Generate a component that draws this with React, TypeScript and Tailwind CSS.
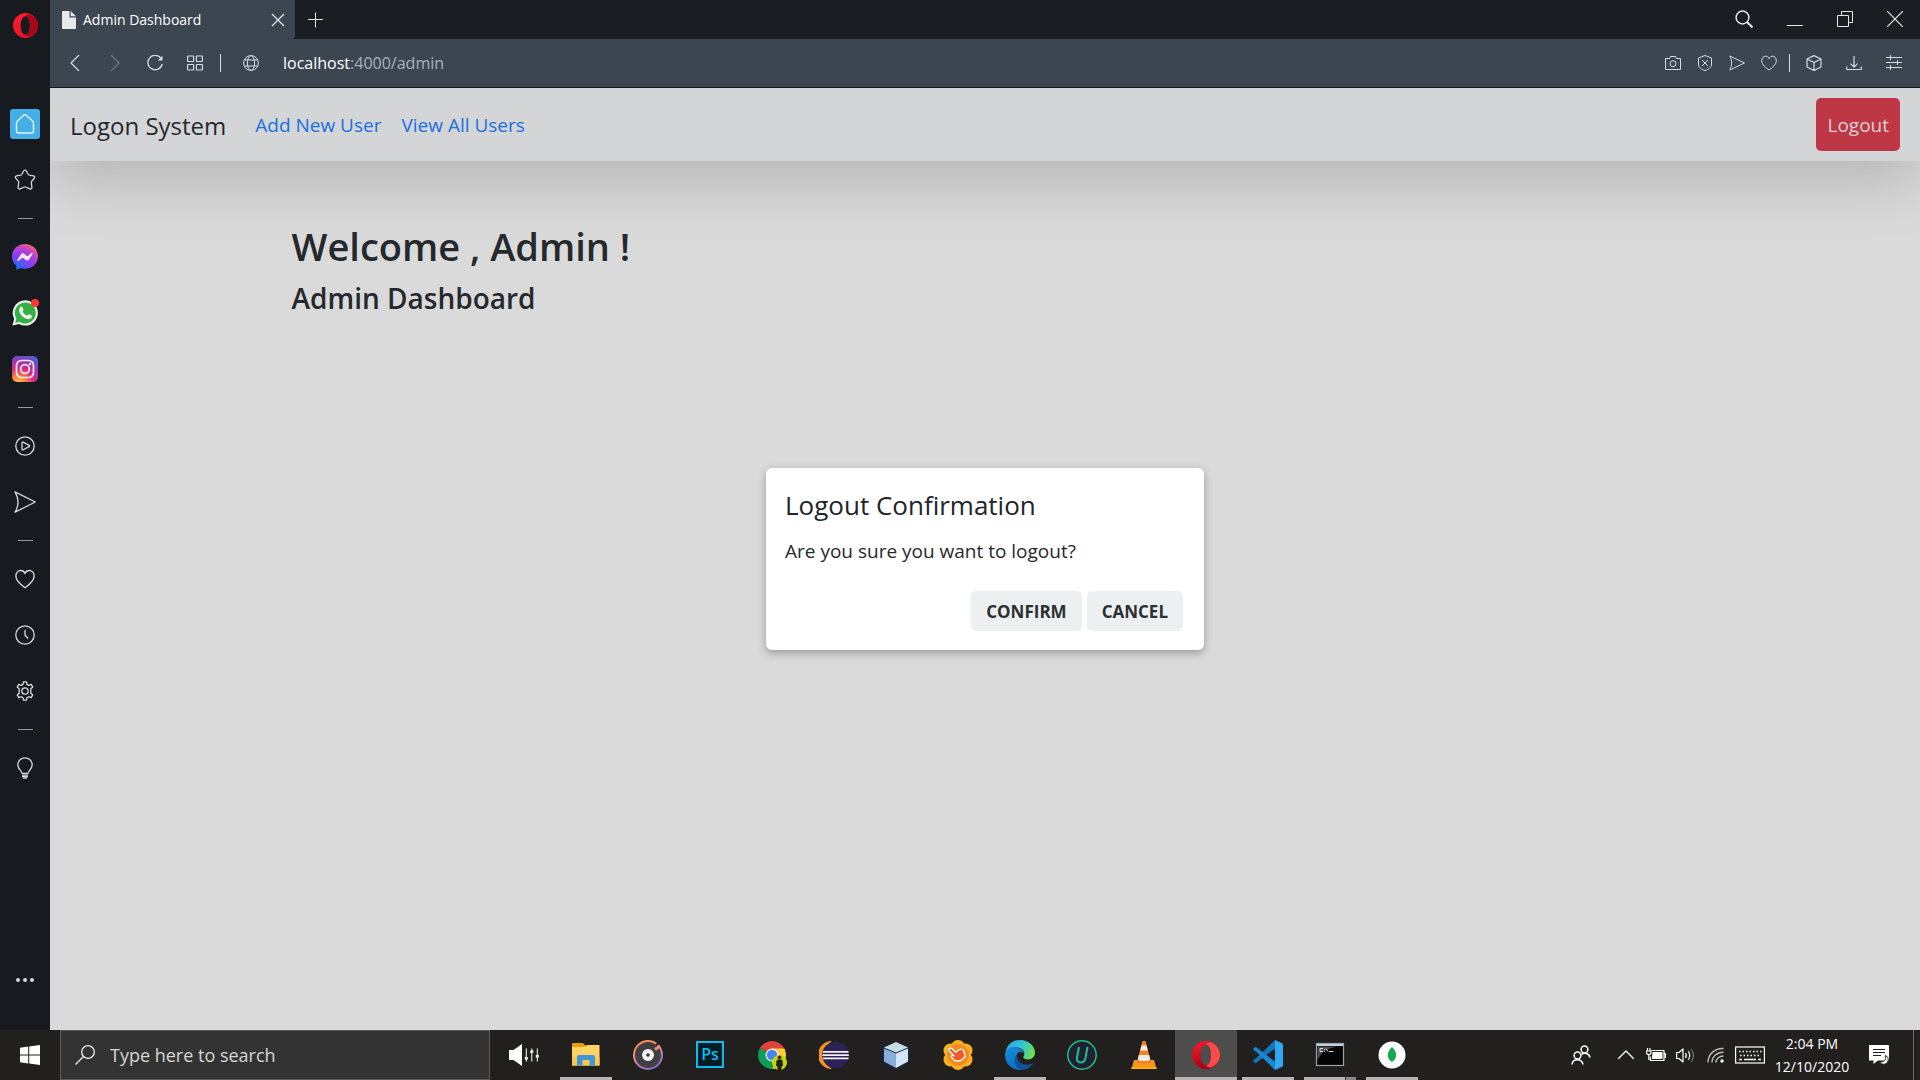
import React from 'react';

type IconProps = { children: React.ReactNode; size?: string; box?: string; w?: number };

function Line({ children, size = 'size-4', box = '0 0 16 16', w = 1 }: IconProps) {
  return (
    <svg viewBox={box} className={`${size} shrink-0`} fill="none" stroke="currentColor" strokeWidth={w} strokeLinejoin="round" aria-hidden="true">
      {children}
    </svg>
  );
}

const HEART = 'M8 15C5.2 13 .7 9.8.7 5.6.7 3 2.5 1.2 4.7 1.2 6.3 1.2 7.5 2.2 8 3.6 8.5 2.2 9.7 1.2 11.3 1.2c2.2 0 4 1.8 4 4.4C15.3 9.8 10.8 13 8 15Z';

function OperaLogo({ id, flip, size }: { id: string; flip?: boolean; size: string }) {
  return (
    <svg viewBox="0 0 28 28" className={size} aria-hidden="true">
      <defs>
        <linearGradient id={id} x1="0" y1="0" x2={flip ? '0.3' : '0'} y2="1">
          <stop offset="0" stopColor="#ff1b2d" />
          <stop offset="1" stopColor={flip ? '#a70014' : '#f01428'} />
        </linearGradient>
      </defs>
      <path d="M14 0C6.300 0 0 6.300 0 14s6.300 14 14 14c7.700 0 14-6.300 14-14S21.700 0 14 0Zm0 3.500c3 0 5 4.500 5 10.500s-2 10.500-5 10.500S8.500 20 8.500 14 11 3.500 14 3.500Z" fill={`url(#${id})`} fillRule="evenodd" />
      <path d="M14 3.500c1-1.500 3-2.200 5-1.900 5.200 1.800 9 6.700 9 12.400s-3.800 10.600-9 12.400c-2 .3-4-.4-5-1.900 3 0 5-4.500 5-10.500S17 3.500 14 3.500Z" fill={flip ? '#fa4a4a' : '#a90518'} />
    </svg>
  );
}

function SideButton({ label, children }: { label: string; children: React.ReactNode }) {
  return (
    <button type="button" aria-label={label} className="flex h-14 w-full shrink-0 items-center justify-center">
      {children}
    </button>
  );
}

function SideRule() {
  return (
    <div className="flex h-[21px] w-full shrink-0 items-center justify-center">
      <div className="h-px w-[15px] bg-[#8c9aa3]" />
    </div>
  );
}

function Sidebar() {
  return (
    <nav aria-label="Browser sidebar" className="flex w-[50px] shrink-0 flex-col items-center bg-[#171a1f] text-[#d3dadf]">
      <button type="button" aria-label="Opera menu" className="flex h-[50px] w-full items-center justify-center">
        <OperaLogo id="opera-menu" size="size-[25px]" />
      </button>
      <div className="h-[46px]" />
      <SideButton label="Speed dial">
        <span className="flex size-[30px] items-center justify-center rounded-[3px] bg-[#44aee6] text-[#e6f4fc]">
          <Line size="size-5" box="0 0 20 20" w={1.4}>
            <path d="M10 .8c.5 0 .9.200 1.300.500l6.200 5.600c.7.700 1 1.300 1 2.200V17c0 1.200-.9 2-2 2h-13c-1.100 0-2-.8-2-2V9.100c0-.9.300-1.500 1-2.200l6.200-5.600c.4-.3.800-.5 1.300-.5Z" />
          </Line>
        </span>
      </SideButton>
      <SideButton label="Bookmarks">
        <Line size="size-[22px]" box="0 0 22 22" w={1.3}>
          <path d="M9.800 1.800c.5-1 1.900-1 2.400 0l2.100 3.700c.2.300.5.500.9.600l4.300.8c1.100.2 1.500 1.500.8 2.300l-2.700 3.200c-.3.300-.4.700-.3 1.100l.6 5c.1 1.100-1 1.900-2 1.400L11.600 18c-.4-.2-.8-.2-1.200 0l-4.300 1.900c-1 .5-2.100-.3-2-1.400l.6-5c.1-.4 0-.8-.3-1.100L1.700 9.200c-.7-.8-.3-2.100.8-2.300l4.300-.8c.4-.1.700-.3.9-.6Z" />
        </Line>
      </SideButton>
      <SideRule />
      <SideButton label="Messenger">
        <svg viewBox="0 0 26 26" className="size-[26px]" aria-hidden="true">
          <defs>
            <radialGradient id="messenger" cx="0.2" cy="1" r="1.1">
              <stop offset="0" stopColor="#0a7cff" />
              <stop offset="0.5" stopColor="#8a3bf5" />
              <stop offset="0.75" stopColor="#b541d8" />
              <stop offset="1" stopColor="#f75f71" />
            </radialGradient>
          </defs>
          <path d="M13 0C5.700 0 0 5.300 0 12.500c0 3.800 1.700 7 4.400 9.300V26l4.200-1.900c1.400.5 2.900.7 4.400.7 7.300 0 13-5.300 13-12.500S20.300 0 13 0Z" fill="url(#messenger)" />
          <path d="m5.200 16.200 3.900-6.100c.6-1 1.900-1.200 2.800-.5l3 2.300c.3.200.7.200 1 0l4-3.100c.5-.4 1.200.2.900.8l-3.900 6.100c-.6 1-1.900 1.200-2.800.5l-3-2.300c-.3-.2-.7-.2-1 0l-4 3.100c-.5.4-1.200-.3-.9-.8Z" fill="#f3e9f8" />
        </svg>
      </SideButton>
      <SideButton label="WhatsApp">
        <span className="relative">
          <svg viewBox="0 0 26 26" className="size-[26px]" aria-hidden="true">
            <path d="M.4 25.600 2.200 19A12.600 12.600 0 1 1 7 23.900Z" fill="#eef2ee" />
            <path d="M3.200 22.900 4.400 18.700A10.500 10.500 0 1 1 7.400 21.800Z" fill="#35b044" />
            <path d="M8.300 7.300c.4-.8 1.400-.9 1.900-.3l1.300 2.700c.2.500-.8 1.500-1 1.900 1 2 2.500 3.300 4.600 4.100.5-.2 1.300-1.600 1.800-1.500l2.800 1.400c.6.300.2 1.800-.3 2.400-1.200 1.200-3 1.400-4.700.8-3.500-1.200-6-3.600-7.300-6.800-.4-1.700-.1-3.500.9-4.700Z" fill="#f3f8f3" />
          </svg>
          <span className="absolute -top-px -right-px size-2 rounded-full bg-[#ff3b30]" />
        </span>
      </SideButton>
      <SideButton label="Instagram">
        <svg viewBox="0 0 26 26" className="size-[26px]" aria-hidden="true">
          <defs>
            <radialGradient id="instagram" cx="0.25" cy="1.05" r="1.15">
              <stop offset="0" stopColor="#ffd15c" />
              <stop offset="0.25" stopColor="#f9813a" />
              <stop offset="0.5" stopColor="#d92e7f" />
              <stop offset="0.75" stopColor="#9b36b7" />
              <stop offset="1" stopColor="#515bd4" />
            </radialGradient>
          </defs>
          <rect width="26" height="26" rx="5" fill="url(#instagram)" />
          <g fill="none" stroke="#f6eaf3" strokeWidth="1.700">
            <rect x="4.500" y="4.500" width="17" height="17" rx="5" />
            <circle cx="13" cy="13" r="4.300" />
          </g>
          <circle cx="18" cy="8" r="1.200" fill="#f6eaf3" />
        </svg>
      </SideButton>
      <SideRule />
      <SideButton label="Player">
        <Line size="size-5" box="0 0 20 20" w={1.3}>
          <circle cx="10" cy="10" r="9.200" />
          <path d="M7 6.900c0-.7.600-1 1.200-.7l6 3.100c.6.300.6 1 0 1.300l-6 3.200c-.6.300-1.200 0-1.200-.7Z" />
        </Line>
      </SideButton>
      <SideButton label="My Flow">
        <Line size="size-[22px]" box="0 0 22 22" w={1.3}>
          <path d="M1 .8 21.300 11 1 21.200C5 14.500 5 7.500 1 .8Z" />
        </Line>
      </SideButton>
      <SideRule />
      <SideButton label="Pinboards">
        <Line size="size-5" w={1.1}>
          <path d={HEART} />
        </Line>
      </SideButton>
      <SideButton label="History">
        <Line size="size-5" box="0 0 20 20" w={1.3}>
          <circle cx="10" cy="10" r="9.200" />
          <path d="M10 5v5.300l3.200 3.200" />
        </Line>
      </SideButton>
      <SideButton label="Settings">
        <Line size="size-5" box="0 0 20 20" w={1.3}>
          <path d="M8.500.8h3l.5 2.600 1.700 1 2.500-1 1.600 2.700-2 1.700v4.400l2 1.700-1.600 2.700-2.500-.9-1.700 1-.5 2.500h-3L8 16.700l-1.700-1-2.500.9-1.600-2.700 2-1.700V7.800l-2-1.700 1.600-2.700 2.500 1 1.700-1Z" />
          <circle cx="10" cy="10" r="3.200" />
        </Line>
      </SideButton>
      <SideRule />
      <SideButton label="Tips">
        <Line size="size-[22px]" box="0 0 22 22" w={1.3}>
          <path d="M8 16.300c0-2.500-4.200-4-4.200-8.500A7.200 7.200 0 0 1 11 .8a7.200 7.200 0 0 1 7.200 7c0 4.500-4.200 6-4.200 8.500Z" />
          <path d="M8 18.100h6M8 19.600h6M9 21.200h4" />
        </Line>
      </SideButton>
      <button type="button" aria-label="Sidebar setup" className="mt-auto flex h-[100px] w-full items-center justify-center gap-[3px]">
        <span className="size-1 rounded-full bg-current" />
        <span className="size-1 rounded-full bg-current" />
        <span className="size-1 rounded-full bg-current" />
      </button>
    </nav>
  );
}

function TabBar() {
  return (
    <div className="flex h-[39px] shrink-0 items-center bg-[#1a1d21] text-[#e4e8eb]">
      <div className="flex h-full w-[245px] items-center rounded-br-[3px] bg-[#3c4651] pr-[10px] pl-3">
        <svg viewBox="0 0 14 18" className="h-[18px] w-[14px] shrink-0" fill="#e6e9eb" aria-hidden="true">
          <path d="M1 0h6.500v6.500H14V17a1 1 0 0 1-1 1H1a1 1 0 0 1-1-1V1a1 1 0 0 1 1-1Z" />
          <path d="M8.700 0 14 5.300H8.700Z" />
        </svg>
        <span className="ml-[7px] flex-1 text-sm whitespace-nowrap text-white">Admin Dashboard</span>
        <button type="button" aria-label="Close tab">
          <Line size="size-[14px]" box="0 0 14 14" w={1.2}>
            <path d="m1 1 12 12M13 1 1 13" />
          </Line>
        </button>
      </div>
      <button type="button" aria-label="New tab" className="ml-3">
        <Line w={1}>
          <path d="M8.500.5v15M1 7.500h15" />
        </Line>
      </button>
      <div className="ml-auto flex items-center gap-[34px] pr-[17px] pb-px">
        <button type="button" aria-label="Search tabs">
          <Line size="size-[18px]" box="0 0 18 18" w={1.5}>
            <circle cx="7.500" cy="7.500" r="6.400" />
            <path d="m12 12 5.500 5.500" strokeWidth="2" />
          </Line>
        </button>
        <button type="button" aria-label="Minimize">
          <Line>
            <path d="M0 14.500h16" />
          </Line>
        </button>
        <button type="button" aria-label="Restore">
          <Line>
            <path d="M.5 4.500h11v11H.5zM4.500 4.500v-4h11v11h-4" strokeLinejoin="miter" />
          </Line>
        </button>
        <button type="button" aria-label="Close window">
          <Line w={1.2}>
            <path d="m0 0 16 16M16 0 0 16" />
          </Line>
        </button>
      </div>
    </div>
  );
}

function AddressBar() {
  return (
    <div className="flex h-[49px] shrink-0 items-center border-b border-[#15181c] bg-[#3c4651] pr-[18px] pl-[17px] text-[#d5dbe0]">
      <div className="flex items-center gap-6">
        <button type="button" aria-label="Back">
          <Line w={1.2}><path d="M12 0 4 8l8 8" /></Line>
        </button>
        <button type="button" aria-label="Forward" className="text-[#6d7883]">
          <Line w={1.2}><path d="m4 0 8 8-8 8" /></Line>
        </button>
        <button type="button" aria-label="Reload">
          <Line w={1.3}>
            <path d="M14.300 3.800A7.200 7.200 0 1 0 15.200 9" />
            <path d="M15.500.8v4.700h-4.700Z" fill="currentColor" stroke="none" />
          </Line>
        </button>
        <button type="button" aria-label="Start page">
          <Line w={1.2}>
            <rect x=".6" y="1" width="6" height="5.500" rx=".5" />
            <rect x="9.400" y="1" width="6" height="5.500" rx=".5" />
            <rect x=".6" y="9.500" width="6" height="5.500" rx=".5" />
            <rect x="9.400" y="9.500" width="6" height="5.500" rx=".5" />
          </Line>
        </button>
      </div>
      <div className="ml-[17px] h-[18px] w-px bg-[#d5dbe0]" />
      <button type="button" aria-label="Site information" className="ml-[22px]">
        <Line w={1}>
          <circle cx="8" cy="8" r="7.400" />
          <ellipse cx="8" cy="8" rx="3.600" ry="7.400" />
          <path d="M1.600 5h12.800M1.600 11h12.800" />
        </Line>
      </button>
      <button type="button" aria-label="Address" className="ml-6 flex-1 text-left text-base whitespace-nowrap text-[#a9b2ba]">
        <span className="text-white">localhost</span>:4000/admin
      </button>
      <div className="flex items-center gap-4">
        <button type="button" aria-label="Snapshot">
          <Line w={1}>
            <path d="M.5 3.500h4L5.500 1.500h5l1 2h4v11H.5Z" />
            <circle cx="8" cy="8.700" r="3" />
          </Line>
        </button>
        <button type="button" aria-label="Ad blocker">
          <Line w={1}>
            <path d="M8 .5 14.500 3v6c0 3.500-3 5.500-6.500 6.600C4.500 14.500 1.500 12.500 1.500 9V3Z" />
            <path d="m5 5 6 6M11 5l-6 6" />
          </Line>
        </button>
        <button type="button" aria-label="Send to My Flow">
          <Line w={1}><path d="M.8 1 15.500 8 .8 15c2.400-4.600 2.400-9.400 0-14Z" /></Line>
        </button>
        <button type="button" aria-label="Add to bookmarks">
          <Line w={1}><path d={HEART} /></Line>
        </button>
      </div>
      <div className="ml-3 h-[18px] w-px bg-[#d5dbe0]" />
      <div className="ml-4 flex items-center gap-6">
        <button type="button" aria-label="Crypto wallet">
          <Line w={1.2}><path d="M8 .6 15 4v8l-7 3.500L1 12V4ZM1 4l7 3.500L15 4M8 7.500v8" /></Line>
        </button>
        <button type="button" aria-label="Downloads">
          <Line w={1.2}><path d="M8 1v11M4.500 8.700 8 12.200l3.500-3.500M.7 11.500v3h14.600v-3" /></Line>
        </button>
        <button type="button" aria-label="Easy setup">
          <Line w={1}><path d="M0 2.500h16M0 7.500h16M0 12.500h16M4.500 0v5M11.500 5v5M4.500 10v5" /></Line>
        </button>
      </div>
    </div>
  );
}

function Page() {
  return (
    <div className="relative flex flex-1 flex-col overflow-hidden bg-[#dadada] text-[#25292d]">
      <header className="flex h-[73px] shrink-0 items-center bg-[#d4d5d7] px-5 shadow-[0_20px_60px_rgba(0,0,0,0.175)]">
        <a href="#home" className="pt-[2px] text-2xl whitespace-nowrap">Logon System</a>
        <nav className="ml-[29px] flex gap-5 pt-[2px] text-[19px] whitespace-nowrap text-[#1b6fe0]">
          <a href="#add">Add New User</a>
          <a href="#users">View All Users</a>
        </nav>
        <button type="button" className="ml-auto h-[53px] rounded-[5px] bg-[#be3745] px-[11px] pt-[2px] text-[19px] text-[#dcd0d6]">Logout</button>
      </header>
      <main className="mx-auto w-full max-w-[1387px] pt-[57px]">
        <h1 className="text-[38px] leading-[56px] font-semibold">Welcome , Admin !</h1>
        <h2 className="text-[28px] leading-[48px] font-semibold">Admin Dashboard</h2>
      </main>
      <div className="absolute inset-0 flex items-center justify-center">
        <section role="dialog" aria-modal="true" aria-labelledby="dialog-title" className="flex w-[438px] flex-col rounded-md bg-white px-[19px] pt-[17px] pb-[19px] shadow-[0_3px_8px_rgba(0,0,0,0.3)]">
          <h3 id="dialog-title" className="text-[26px] leading-10 text-[#212529]">Logout Confirmation</h3>
          <p className="mt-3 text-[19px] leading-7">Are you sure you want to logout?</p>
          <div className="mt-[26px] flex justify-end gap-[5px] pr-[2px] text-[17px] font-bold text-[#2c2f31]">
            <button type="button" className="h-10 rounded-[5px] bg-[#ecf0f1] px-[15px] pt-px">CONFIRM</button>
            <button type="button" className="h-10 rounded-[5px] bg-[#ecf0f1] px-[15px] pt-px">CANCEL</button>
          </div>
        </section>
      </div>
    </div>
  );
}

function TaskItem({ label, bar, active, stacked, children }: { label: string; bar?: boolean; active?: boolean; stacked?: boolean; children: React.ReactNode }) {
  return (
    <button type="button" aria-label={label} className={`relative flex h-full w-[62px] items-center justify-center ${active ? 'bg-[#4d4d4c]' : ''}`}>
      {children}
      {active && <span className="absolute inset-x-0 bottom-0 h-[3px] bg-[#b9b3b6]" />}
      {bar && <span className="absolute inset-x-[5px] bottom-0 h-[3px] bg-[#b9b3b6]" />}
      {stacked && <span className="absolute right-[5px] bottom-0 h-[3px] w-[11px] border-l border-[#333] bg-[#8b8789]" />}
    </button>
  );
}

const ICON = 'size-[30px]';

function TaskIcons() {
  return (
    <div className="ml-[3px] flex h-full">
      <TaskItem label="Volume mixer">
        <svg viewBox="0 0 30 30" className={ICON} fill="#fff" aria-hidden="true">
          <path d="M0 10h4.500L13 4v22l-8.500-6H0Z" />
          <path d="M16.800 8.500h1v13h-1zM22.300 8.500h1v13h-1zM27.800 8.500h1v13h-1zM15.800 17h3v2.500h-3zM21.300 10.500h3v2.500h-3zM26.800 15h3v2.500h-3z" />
        </svg>
      </TaskItem>
      <TaskItem label="File Explorer" bar>
        <svg viewBox="0 0 30 30" className={ICON} aria-hidden="true">
          <path d="M1 4a1 1 0 0 1 1-1h10l3 3v4H1Z" fill="#e3a008" />
          <path d="M1 7h12l3-2h12.500v20.500H1Z" fill="#fdd365" />
          <path d="M1 17h27.500v8.500H1Z" fill="#fbc94f" />
          <path d="M6 25.500V17a2 2 0 0 1 2-2h14a2 2 0 0 1 2 2v8.500h-5.500V20h-7v5.500Z" fill="#3f97d9" />
        </svg>
      </TaskItem>
      <TaskItem label="Groove Music">
        <svg viewBox="0 0 30 30" className={ICON} aria-hidden="true">
          <defs>
            <linearGradient id="groove" x1="0.2" y1="0" x2="0.7" y2="1">
              <stop offset="0" stopColor="#ff9146" />
              <stop offset="0.5" stopColor="#d88a9c" />
              <stop offset="1" stopColor="#8d67d0" />
            </linearGradient>
          </defs>
          <circle cx="15" cy="15" r="14" fill="#403f41" stroke="url(#groove)" strokeWidth="2" />
          <path d="m22 9.500 5-3.500" stroke="#f08a70" strokeWidth="3" />
          <path d="m23 5.500 3-3" stroke="#22201e" strokeWidth="2" />
          <circle cx="15" cy="15" r="6" fill="#f3f3f3" />
          <circle cx="15" cy="15" r="1.800" fill="#333" />
        </svg>
      </TaskItem>
      <TaskItem label="Photoshop">
        <span className="mb-[2px] flex h-[27px] w-7 items-center justify-center border-2 border-[#10b9ee] bg-[#001d26] text-base font-semibold text-[#10b9ee]">Ps</span>
      </TaskItem>
      <TaskItem label="Chrome">
        <svg viewBox="0 0 30 30" className={ICON} aria-hidden="true">
          <path d="M15 15 2.900 8A14 14 0 0 1 27.100 8Z" fill="#db4437" />
          <path d="M15 15 2.900 8A14 14 0 0 0 15 29l6-10.500Z" fill="#0f9d58" />
          <path d="M15 15 15 8.500H27.400A14 14 0 0 1 15 29l6-10.500Z" fill="#ffcd40" />
          <circle cx="15" cy="15" r="6.500" fill="#f1f1f1" />
          <circle cx="15" cy="15" r="5.200" fill="#4285f4" />
          <circle cx="22.500" cy="22.500" r="7.500" fill="#c6d800" />
          <circle cx="22.500" cy="17.500" r="2" fill="#4a3028" />
          <path d="M19.500 20.500c1-1.300 5-1.300 6 0l.5 5.500h-1.300l-.3 4h-3.800l-.3-4H19Z" fill="#1d2127" />
        </svg>
      </TaskItem>
      <TaskItem label="Eclipse">
        <svg viewBox="0 0 30 30" className={ICON} aria-hidden="true">
          <path d="M13 1A14 14 0 0 0 13 29 17 17 0 0 1 13 1Z" fill="#f7941e" />
          <circle cx="16.500" cy="15" r="13.300" fill="#2c2255" />
          <path d="M4 11h25.500v1.800H4zM3.500 14.200h26.300V16H3.500zM4 17.400h25.500v1.800H4z" fill="#f4f2fa" />
        </svg>
      </TaskItem>
      <TaskItem label="NetBeans">
        <svg viewBox="0 0 30 30" className={ICON} aria-hidden="true">
          <path d="m15 1.500 13 6v14.500l-13 7-13-7V7.500Z" fill="#16275e" />
          <path d="m15 2 12 5.500-12 5-12-5Z" fill="#c5dfe2" />
          <path d="m3 8.500 12 5V28L3 21.500Z" fill="#86aed8" />
          <path d="m27 8.500-12 5V28l12-6.500Z" fill="#d4e5f3" />
        </svg>
      </TaskItem>
      <TaskItem label="Pointer utility">
        <svg viewBox="0 0 30 30" className={ICON} aria-hidden="true">
          <g fill="#f9b021">
            <circle cx="15" cy="7" r="7" /><circle cx="15" cy="23" r="7" />
            <circle cx="7.500" cy="10.500" r="7" /><circle cx="22.500" cy="10.500" r="7" />
            <circle cx="7.500" cy="19.500" r="7" /><circle cx="22.500" cy="19.500" r="7" />
          </g>
          <circle cx="15" cy="15" r="11" fill="#f58b1f" />
          <path d="M6 9c1-1.500 2.500-1 3.500 0l3 3.200 4-2.700c1.500-.8 3 0 4 1l1.800 6-5.300 4.500-5.500-.5-3-3.500c-.5-1 .5-2 1.500-1.500l1 .5L6.500 11Z" fill="#ef5a28" stroke="#fff" strokeWidth="1.300" strokeLinejoin="round" />
        </svg>
      </TaskItem>
      <TaskItem label="Microsoft Edge" bar>
        <svg viewBox="0 0 30 30" className={ICON} aria-hidden="true">
          <defs>
            <linearGradient id="edge-top" x1="0" y1="0.300" x2="1" y2="0.600">
              <stop offset="0" stopColor="#2aa8e8" />
              <stop offset="0.500" stopColor="#35c1d6" />
              <stop offset="1" stopColor="#6fe04c" />
            </linearGradient>
            <linearGradient id="edge-low" x1="0" y1="0" x2="0.800" y2="1">
              <stop offset="0" stopColor="#1390df" />
              <stop offset="1" stopColor="#0b62b8" />
            </linearGradient>
          </defs>
          <path d="M.5 12C2 5 7.500 0 15 0c8.500 0 15 6 15 12.500 0 4-3 7-7 7-3.500 0-5.500-1.500-4.500-3 2-3 .5-8-6-9C8 7 3 8.500.5 12Z" fill="url(#edge-top)" />
          <path d="M0 15c0-5 4-8 9-8 6 0 9.500 3.500 9.500 7-2-3-6.500-2.500-7 2-.5 5 4 9.500 9 9.500 3 0 5-.8 7.500-2.200C25.500 27.500 21 30 15 30 6.500 30 0 23.500 0 15Z" fill="url(#edge-low)" />
          <path d="M11.500 15c-4 5.500-1 13.500 6 14.800 4.500-.4 8.300-2.800 10.500-6.500-8 3.700-15.500.2-16.500-8.300Z" fill="#10529c" />
        </svg>
      </TaskItem>
      <TaskItem label="IObit Uninstaller">
        <svg viewBox="0 0 30 30" className={ICON} aria-hidden="true">
          <circle cx="15" cy="15" r="14.200" fill="#1f2138" stroke="#25c07a" strokeWidth="1.500" />
          <path d="m12 7-2 10.500c-.6 3 1 5 3.500 5s4.300-1.500 5-4.500L20.500 7" fill="none" stroke="#25c07a" strokeWidth="2" />
        </svg>
      </TaskItem>
      <TaskItem label="VLC">
        <svg viewBox="0 0 30 30" className={ICON} aria-hidden="true">
          <path d="m5 20-2.500 9h25L25 20Z" fill="#f7941d" />
          <path d="M13.500 1h3L22 22c-3 2.500-11 2.500-14 0Z" fill="#f58220" />
          <path d="M12.500 5.500h5l1.300 5h-7.600zM10 15h10l1.300 4.500c-3 2-9.500 2-12.600 0Z" fill="#ececec" />
          <path d="M2.500 27.500h25V29h-25z" fill="#fdb515" />
        </svg>
      </TaskItem>
      <TaskItem label="Opera" active>
        <OperaLogo id="opera-task" flip size="size-7" />
      </TaskItem>
      <TaskItem label="Visual Studio Code" bar>
        <svg viewBox="0 0 30 30" className={ICON} aria-hidden="true">
          <path d="M22 0 3.500 18 .5 20c-.6.500-.5 1 0 1.500L2 22.800c.4.300.9.300 1.300 0L22 8.500Z" fill="#1277bd" />
          <path d="M22 30 3.500 12l-3-2c-.6-.5-.5-1 0-1.500L2 7.200c.4-.3.900-.3 1.300 0L22 21.500Z" fill="#1688d2" />
          <path d="m22 0 7 3.200c.6.300 1 .9 1 1.600v20.400c0 .7-.4 1.300-1 1.600L22 30Z" fill="#2fa8f2" />
        </svg>
      </TaskItem>
      <TaskItem label="Command Prompt" bar stacked>
        <svg viewBox="0 0 30 30" className={ICON} aria-hidden="true">
          <rect x="1.500" y="3.500" width="27" height="22" fill="#050505" stroke="#9aa3ab" strokeWidth="1.200" />
          <path d="M2 4h26v2H2z" fill="#c4ced8" />
          <path d="M2.500 6.500h20C14 8 8 11 5 16l-2.500 4Z" fill="#4b4b4b" />
          <path d="M5 8.500H8M5 8.500v3h3M9.500 9v.8M9.500 11v.8M11 8.500l2 3M14 11.500h4.500" stroke="#ddd" strokeWidth="1" fill="none" />
        </svg>
      </TaskItem>
      <TaskItem label="MongoDB Compass" bar>
        <svg viewBox="0 0 30 30" className={ICON} aria-hidden="true">
          <circle cx="15" cy="15" r="13.500" fill="#fff" />
          <path d="M15 7c6 5.500 5 12 .4 14.500L15 23l-.4-1.500C10 19 9 12.500 15 7Z" fill="#13aa52" />
        </svg>
      </TaskItem>
    </div>
  );
}

function Tray() {
  return (
    <div className="ml-auto flex h-full items-center text-white">
      <button type="button" aria-label="People">
        <Line size="size-5" box="0 0 20 20" w={1.5}>
          <circle cx="13.500" cy="4.500" r="3.400" />
          <path d="M10.500 9.500c3-2.300 7.500-1.500 8.500 3" />
          <circle cx="6.500" cy="10.500" r="3.400" />
          <path d="M1 19.500c.5-6.500 10-6.500 11 0" />
        </Line>
      </button>
      <button type="button" aria-label="Show hidden icons" className="ml-[27px]">
        <Line w={1.3}><path d="m0 12 8-8 8 8" /></Line>
      </button>
      <button type="button" aria-label="Battery" className="ml-3">
        <Line size="size-5" box="0 0 20 20" w={1.2}>
          <path d="M5.500 5.500H18v10H4.500v-4M18 8.500h1.500v4H18" />
          <path d="M6.500 7h10v7H6z" fill="currentColor" stroke="none" />
          <path d="M1.500 3v3M4 3v3M.5 6h4.500v2c0 2-4.500 2-4.500 0ZM2.800 9.500v5h2" />
        </Line>
      </button>
      <button type="button" aria-label="Volume" className="ml-[10px]">
        <Line size="size-5" box="0 0 20 20" w={1.2}>
          <path d="M.6 7.500H3L7 4v13l-4-3.500H.6Z" />
          <path d="M9.500 8c1 1.500 1 3.500 0 5M12.200 6c2 2.500 2 6.500 0 9" />
          <path d="M15 4c3 4 3 9 0 13" stroke="#777" />
        </Line>
      </button>
      <button type="button" aria-label="Wi-Fi" className="ml-[11px]">
        <Line size="size-[18px]" box="0 0 18 18" w={1.4}>
          <path d="M1 16.500C1 8 8 2 16.500 2.500M5 16.500c0-6 5-10.500 11.500-10.300M9 16.500c0-4 3.500-6.500 7.500-6.500" stroke="#bbb" />
          <circle cx="15" cy="15" r="1.700" fill="currentColor" stroke="none" />
        </Line>
      </button>
      <button type="button" aria-label="Touch keyboard" className="ml-[10px]">
        <svg viewBox="0 0 30 18" className="h-[18px] w-[30px]" fill="none" stroke="currentColor" aria-hidden="true">
          <rect x=".6" y="1" width="28.800" height="16" strokeWidth="1.200" />
          <path d="M4 5.500h23M5 9.500h21" strokeWidth="1.500" strokeDasharray="1.500 2" />
          <path d="M4 13.500h3M9 13.500h12M23 13.500h3" strokeWidth="1.300" />
        </svg>
      </button>
      <button type="button" className="w-[94px] text-center text-sm leading-[23px]">
        <span className="block">2:04 PM</span>
        <span className="block">12/10/2020</span>
      </button>
      <button type="button" aria-label="Notifications" className="ml-[10px]">
        <svg viewBox="0 0 20 20" className="size-5" aria-hidden="true">
          <path d="M0 0h20v15.500H9L4.500 19v-3.500H0Z" fill="#fff" />
          <path d="M4 4.500h12M4 7.500h12M4 10.500h8" stroke="#222" />
          <path d="M16.500 10.500c2 1 3 2.500 2.600 5-.6 3-3.600 4.500-6.600 3.300-1-.4-1.500-1-2-1.800 4 .5 7-2 6-6.500Z" fill="#fff" stroke="#222" />
        </svg>
      </button>
      <div className="ml-6 h-full w-[7px] border-l border-[#6b6b6a]" />
    </div>
  );
}

function Taskbar() {
  return (
    <footer className="flex h-[50px] shrink-0 items-center bg-[#22201e]">
      <button type="button" aria-label="Start" className="flex h-full w-[60px] items-center justify-center">
        <svg viewBox="0 0 20 20" className="size-5" fill="#fff" aria-hidden="true">
          <path d="M0 2.800 8.200 1.600v7.900H0zM9.200 1.500 20 0v9.500H9.200zM0 10.500h8.200v7.900L0 17.200zM9.200 10.500H20V20L9.200 18.500z" />
        </svg>
      </button>
      <label className="flex h-full w-[430px] items-center border border-[#5c5c5c] bg-[#333] pl-[14px] text-[#f0f0f0]">
        <Line size="size-5" box="0 0 20 20" w={1.3}>
          <circle cx="13" cy="7" r="6.300" />
          <path d="M8.500 11.500.5 19.500" />
        </Line>
        <input type="text" aria-label="Search" placeholder="Type here to search" className="ml-[15px] flex-1 bg-transparent text-lg outline-none placeholder:text-[#d6d6d6]" />
      </label>
      <TaskIcons />
      <Tray />
    </footer>
  );
}

export default function App() {
  return (
    <div className="flex h-screen flex-col overflow-hidden font-['Open_Sans','Noto_Sans',sans-serif]">
      <div className="flex min-h-0 flex-1">
        <Sidebar />
        <div className="flex min-w-0 flex-1 flex-col">
          <TabBar />
          <AddressBar />
          <Page />
        </div>
      </div>
      <Taskbar />
    </div>
  );
}
